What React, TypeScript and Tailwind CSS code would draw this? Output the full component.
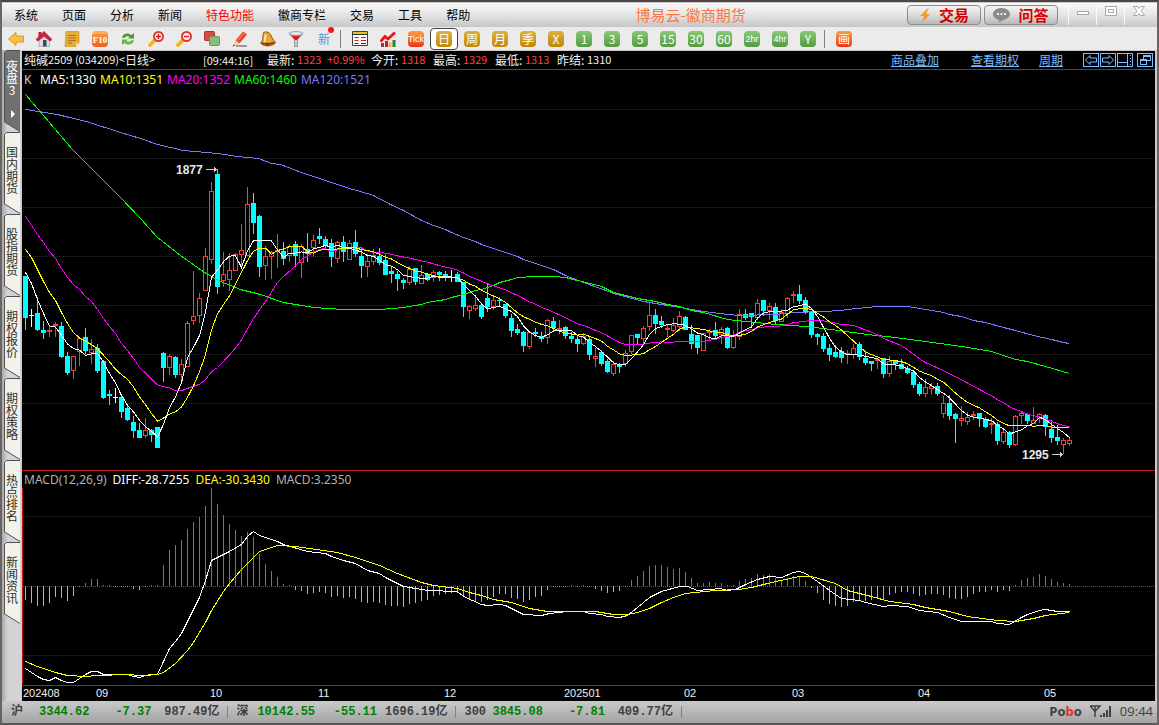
import type { ReactNode } from "react";
import clsx from "clsx";

// [direction, high, body top, body bottom, low] in chart rows
type Candle = ["u" | "d" | "f", number, number, number, number];

const candles: Candle[] = [
  ["d", 276, 276, 318, 330], ["f", 309, 315, 316, 327], ["d", 297, 313, 330, 331], ["d", 321, 330, 333, 339],
  ["u", 325, 330, 332, 337], ["u", 322, 324, 326, 337], ["d", 322, 326, 357, 358], ["d", 352, 356, 373, 375],
  ["u", 356, 356, 371, 379], ["u", 338, 338, 352, 366], ["d", 328, 337, 351, 354], ["u", 339, 349, 353, 364],
  ["d", 344, 348, 371, 373], ["d", 360, 361, 398, 399], ["d", 390, 394, 396, 405], ["f", 388, 397, 398, 403],
  ["d", 396, 397, 412, 418], ["d", 406, 408, 420, 421], ["d", 416, 422, 431, 438], ["d", 423, 430, 438, 438],
  ["u", 418, 430, 436, 438], ["d", 429, 430, 435, 442], ["d", 427, 427, 448, 448], ["d", 352, 353, 368, 382],
  ["u", 354, 356, 368, 375], ["d", 356, 357, 375, 378], ["u", 359, 364, 375, 380], ["u", 321, 323, 367, 367],
  ["u", 271, 316, 321, 325], ["u", 293, 298, 316, 323], ["u", 248, 256, 291, 291], ["u", 182, 191, 260, 264],
  ["d", 169, 174, 287, 294], ["u", 252, 274, 281, 287], ["u", 253, 270, 280, 291], ["u", 253, 254, 271, 271],
  ["u", 224, 250, 255, 267], ["u", 187, 204, 256, 256], ["d", 193, 203, 223, 234], ["d", 215, 216, 267, 277],
  ["u", 246, 256, 266, 280], ["u", 251, 252, 257, 279], ["u", 234, 250, 252, 268], ["d", 242, 251, 259, 265],
  ["u", 244, 246, 256, 262], ["d", 241, 244, 256, 267], ["u", 244, 246, 263, 278], ["d", 233, 249, 254, 262],
  ["u", 235, 240, 248, 257], ["d", 228, 236, 239, 244], ["d", 236, 239, 245, 249], ["d", 239, 243, 257, 267],
  ["u", 241, 242, 259, 263], ["d", 236, 242, 252, 262], ["u", 240, 243, 260, 260], ["d", 230, 242, 254, 257],
  ["d", 247, 256, 266, 278], ["u", 254, 261, 267, 277], ["u", 249, 255, 262, 265], ["d", 248, 256, 263, 265],
  ["d", 255, 260, 275, 275], ["d", 267, 271, 274, 283], ["d", 271, 274, 279, 291], ["d", 278, 280, 283, 289],
  ["u", 266, 269, 283, 285], ["d", 268, 268, 282, 285], ["u", 265, 275, 284, 284], ["d", 273, 274, 280, 281],
  ["u", 270, 272, 278, 282], ["d", 271, 272, 275, 281], ["d", 271, 274, 278, 281], ["f", 270, 277, 278, 282],
  ["d", 272, 274, 282, 282], ["d", 282, 282, 307, 317], ["u", 305, 306, 311, 319], ["u", 297, 305, 309, 311],
  ["d", 304, 305, 317, 319], ["d", 284, 298, 307, 312], ["u", 297, 300, 307, 310], ["d", 297, 300, 301, 307],
  ["d", 304, 304, 316, 318], ["d", 314, 318, 331, 337], ["d", 324, 329, 333, 335], ["d", 331, 332, 346, 352],
  ["u", 331, 332, 347, 349], ["d", 328, 332, 334, 337], ["d", 332, 336, 339, 342], ["u", 319, 320, 338, 344],
  ["d", 317, 321, 328, 331], ["u", 320, 328, 330, 334], ["d", 326, 327, 336, 339], ["d", 332, 336, 339, 343],
  ["d", 336, 339, 344, 352], ["u", 333, 336, 344, 345], ["d", 337, 339, 355, 360], ["u", 348, 356, 359, 367],
  ["d", 350, 352, 364, 366], ["d", 359, 361, 372, 373], ["u", 361, 364, 374, 376], ["d", 363, 365, 367, 373],
  ["u", 350, 353, 364, 367], ["u", 335, 335, 352, 354], ["d", 334, 334, 338, 344], ["u", 326, 328, 339, 343],
  ["u", 303, 315, 327, 331], ["d", 309, 315, 324, 334], ["d", 316, 321, 325, 328], ["u", 325, 328, 330, 337],
  ["u", 318, 325, 331, 332], ["u", 311, 316, 327, 331], ["d", 316, 317, 330, 330], ["d", 325, 334, 344, 349],
  ["d", 335, 335, 348, 354], ["u", 333, 333, 351, 351], ["u", 329, 331, 333, 341], ["d", 322, 330, 336, 340],
  ["u", 327, 329, 335, 344], ["d", 327, 328, 348, 349], ["u", 330, 336, 348, 349], ["u", 309, 314, 337, 340],
  ["d", 309, 314, 318, 320], ["d", 313, 313, 317, 327], ["u", 299, 303, 318, 320], ["d", 300, 300, 311, 316],
  ["u", 303, 306, 311, 320], ["d", 303, 307, 321, 324], ["u", 309, 312, 322, 322], ["u", 297, 298, 314, 318],
  ["u", 291, 294, 296, 303], ["d", 285, 294, 301, 304], ["d", 297, 300, 312, 314], ["d", 311, 311, 335, 338],
  ["d", 333, 334, 337, 345], ["d", 333, 336, 349, 352], ["d", 344, 348, 355, 361], ["d", 345, 352, 357, 358],
  ["d", 347, 351, 358, 363], ["u", 350, 353, 355, 364], ["u", 344, 348, 355, 359], ["d", 342, 344, 357, 360],
  ["d", 352, 358, 363, 365], ["d", 361, 361, 364, 371], ["u", 358, 359, 361, 369], ["d", 358, 358, 374, 378],
  ["u", 356, 361, 374, 377], ["d", 360, 361, 364, 370], ["d", 359, 364, 369, 369], ["d", 366, 368, 373, 374],
  ["d", 370, 372, 385, 388], ["d", 382, 384, 394, 396], ["u", 379, 387, 394, 397], ["u", 383, 386, 389, 395],
  ["d", 383, 386, 394, 396], ["u", 396, 403, 414, 418], ["d", 395, 403, 416, 420], ["d", 413, 414, 419, 443],
  ["u", 406, 418, 421, 426], ["u", 412, 417, 422, 425], ["u", 411, 414, 416, 420], ["d", 413, 413, 419, 427],
  ["d", 417, 419, 427, 428], ["u", 418, 423, 425, 434], ["d", 422, 424, 441, 445], ["u", 429, 432, 442, 444],
  ["d", 431, 432, 445, 448], ["u", 415, 416, 445, 446], ["u", 411, 413, 416, 424], ["d", 413, 414, 421, 424],
  ["u", 407, 420, 424, 424], ["u", 413, 414, 419, 423], ["d", 414, 415, 427, 436], ["d", 420, 429, 438, 443],
  ["d", 425, 437, 441, 445], ["u", 438, 440, 445, 454], ["u", 438, 440, 444, 446],
];

const macdBars = [
  -14, -17, -20, -20, -17, -11, -12, -15, -10, -1, 3, 7, 7, 1, 1, -1, -1, -1, -3, -4, -1, 1, 1, 21, 36, 41, 46, 57, 64,
  69, 80, 98, 82, 71, 62, 56, 50, 54, 49, 32, 22, 15, 9, 2, 1, -4, -5, -8, -7, -6, -7, -11, -10, -12, -11, -13, -16,
  -17, -16, -17, -19, -20, -20, -21, -18, -17, -15, -14, -10, -9, -8, -7, -7, -11, -14, -15, -16, -14, -11, -8, -8, -12,
  -13, -16, -14, -11, -10, -4, -1, -1, -1, 1, -1, 1, -1, -3, -5, -7, -6, -5, -1, 6, 10, 15, 20, 21, 21, 19, 17, 18, 14,
  8, 3, 3, 4, 3, 3, 1, 1, 5, 7, 8, 12, 11, 12, 8, 6, 8, 10, 9, 5, -2, -7, -14, -18, -20, -21, -20, -16, -14, -15, -14,
  -12, -13, -9, -7, -6, -6, -8, -10, -9, -8, -8, -9, -12, -13, -13, -11, -8, -6, -6, -4, -6, -4, -5, 1, 6, 8, 9, 12, 10,
  7, 4, 3, 2,
];

const ma60 =
  "25,94 72,149 120,197 140,218 157,237 180,255 204,272 220,281 240,289 260,294 283,302 313,307 343,309 380,309 403,307 421,304 427,302 445,299 451,297 463,294 475,290 481,289 493,285 499,282 511,279 517,277 535,276 553,276 565,277 577,280 590,283 601,286 613,292 625,295 637,298 655,301 667,304 679,306 691,310 703,312 727,319 745,321 775,324 793,325 823,328 867,334 895,337 925,341 961,346 991,351 1015,359 1027,361 1045,366 1069,373";
const ma120 =
  "25,109 57,114 69,117 86,121 120,132 140,138 157,144 183,150 217,153 237,156 258,158 271,163 280,164 301,172 307,174 325,180 349,188 360,191 373,195 390,204 403,210 421,220 433,225 445,229 451,232 463,237 475,241 481,244 499,250 517,256 523,259 553,269 565,275 583,282 600,288 613,293 643,301 667,305 703,311 727,314 739,315 775,314 793,312 823,311 841,310 847,309 877,306 907,306 925,309 943,312 949,314 961,316 973,320 985,322 1003,327 1015,330 1033,335 1051,339 1063,342 1069,343";
const diff =
  "25,668 37,676 43,679 49,680 55,677 61,680 67,682 73,682 85,674 91,671 97,671 103,674 127,674 133,676 139,677 145,675 157,674 163,661 169,648 175,641 181,633 187,621 193,609 199,597 205,580 211,560 229,551 241,544 247,536 253,531 259,535 277,541 283,544 307,551 325,553 331,556 343,560 355,563 367,570 379,573 385,577 403,586 415,588 427,590 457,591 463,596 481,604 487,605 499,604 505,605 523,614 541,615 549,613 567,611 583,611 589,613 601,614 607,616 619,617 627,615 637,607 649,597 661,591 679,586 687,586 697,590 720,588 727,590 735,589 745,584 757,579 769,576 781,577 793,572 799,571 805,573 817,581 829,590 841,598 859,600 865,602 883,606 890,605 907,606 919,610 937,612 949,617 961,621 991,621 997,623 1009,624 1021,617 1027,614 1039,610 1045,609 1057,611 1069,611";
const dea =
  "25,661 37,666 55,672 67,675 85,676 97,675 127,674 139,675 157,674 163,672 175,663 187,650 193,642 205,622 211,610 223,591 229,583 241,569 253,557 259,551 277,545 295,546 337,552 355,557 379,565 397,573 421,582 433,585 457,588 469,592 481,595 493,599 511,602 529,608 547,611 595,611 613,614 627,614 637,612 649,608 661,602 673,597 685,593 715,590 739,589 751,587 763,584 780,580 799,576 811,576 835,583 847,590 859,593 871,596 889,601 913,604 925,607 949,611 967,616 997,620 1015,621 1033,618 1045,615 1069,612";

const closes = candles.map(([dir, , top, bottom]) => (dir === "u" ? top : bottom));
const xOf = (i: number) => 25 + i * 6;

// moving average, with the values that come from before the first bar
const average = (n: number, lead: number[]) =>
  closes
    .map((_, i) => {
      const y = i < lead.length ? lead[i] : closes.slice(i - n + 1, i + 1).reduce((a, b) => a + b, 0) / n;
      return `${xOf(i)},${y}`;
    })
    .join(" ");

const ma5 = average(5, [272, 283, 299, 313]);
const ma10 = average(10, [249, 257, 269, 281, 292, 300, 312, 323, 332]);
const ma20 = average(20, [216, 225, 234, 242, 251, 258, 268, 277, 284, 289, 296, 301, 309, 318, 326, 333, 343, 350, 358]);

const RED = "#ff3c3c";
const CYAN = "#00ffff";

const GridLine = ({ y, color = "#900000" }: { y: number; color?: string }) => (
  <line x1="1" x2="100%" y1={y + 0.5} y2={y + 0.5} stroke={color} strokeDasharray="1 1" />
);

const Curve = ({ points, color }: { points: string; color: string }) => (
  <polyline points={points} transform="translate(0.5 0.5)" fill="none" stroke={color} />
);

const Bar = ({ candle, x }: { candle: Candle; x: number }) => {
  const [dir, high, top, bottom, low] = candle;
  const color = dir === "u" ? RED : dir === "d" ? CYAN : "#ffffff";
  const hollow = dir === "u" && bottom - top > 2;
  return (
    <g fill={color}>
      <rect x={x} y={high} width="1" height={Math.max(top - high, 0)} />
      <rect x={x} y={bottom} width="1" height={Math.max(low - bottom, 0)} />
      {hollow ? (
        <rect x={x - 1.5} y={top + 0.5} width="4" height={bottom - top - 1} fill="none" stroke={color} />
      ) : (
        <rect x={x - 2} y={top} width="5" height={Math.max(bottom - top, 1)} />
      )}
    </g>
  );
};

const PriceChart = () => (
  <svg className="block h-[380px] w-full" shapeRendering="crispEdges" role="img" aria-label="K">
    {[19, 68, 117, 166, 215, 264, 313].map((y) => (
      <GridLine key={y} y={y} />
    ))}
    <g transform="translate(-22 -90)">
      {candles.map((c, i) => (
        <Bar key={i} candle={c} x={xOf(i)} />
      ))}
      <Curve points={ma120} color="#7878ff" />
      <Curve points={ma60} color="#00ff00" />
      <Curve points={ma20} color="#ff00ff" />
      <Curve points={ma10} color="#ffff00" />
      <Curve points={ma5} color="#ffffff" />
      <g fill="#e8e8e8" className="font-['Liberation_Sans',sans-serif] text-xs font-bold">
        <text x="176" y="174">1877</text>
        <text x="1022" y="459">1295</text>
      </g>
      <g fill="none" stroke="#d0d0d0">
        <path d="M206 169.500h11M214.500 167v5M215.500 168v3" />
        <path d="M1052 454.500h11M1060.500 452v5M1061.500 453v3" />
      </g>
    </g>
  </svg>
);

const MacdChart = () => (
  <svg className="block h-[197px] w-full" shapeRendering="crispEdges" role="img" aria-label="MACD">
    <rect x="0" y="0" width="1" height="196" fill="#c81414" />
    <GridLine y={28} />
    <GridLine y={98} color="#e01818" />
    <GridLine y={167} />
    <g transform="translate(-22 -488)">
      {macdBars.map((v, i) => (
        <rect
          key={i}
          x={xOf(i)}
          y={v > 0 ? 586 - v : 586}
          width="1"
          height={Math.abs(v)}
          fill={v > 0 ? RED : CYAN}
        />
      ))}
      <Curve points={diff} color="#ffffff" />
      <Curve points={dea} color="#ffff00" />
    </g>
  </svg>
);

const months = [
  [1, "202408"], [74, "09"], [188, "10"], [296, "11"], [422, "12"],
  [542, "202501"], [662, "02"], [770, "03"], [896, "04"], [1022, "05"],
] as const;

const DateAxis = () => (
  <svg className="block h-[15px] w-full font-['Liberation_Sans',sans-serif] text-[11px]" fill="#f0f0f0">
    {months.map(([x, label]) => (
      <text key={x} x={x} y="11">
        {label}
      </text>
    ))}
  </svg>
);

const menus = ["系统", "页面", "分析", "新闻", "特色功能", "徽商专栏", "交易", "工具", "帮助"];

const WindowButton = ({ label, children }: { label: string; children: ReactNode }) => (
  <button aria-label={label} className="flex h-5 w-7 items-start justify-center border-l border-white/80">
    <svg width="14" height="12" viewBox="0 0 14 12" fill="#fff" stroke="#a8a8a8">
      {children}
    </svg>
  </button>
);

const bigButton =
  "flex h-5 w-[74px] items-center justify-center gap-2 rounded border border-[#8c8c8c] bg-linear-to-b from-[#f4f4f4] via-[#dcdcdc] to-[#b8b8b8] text-[15px] leading-4 font-bold text-[#d80000]";

const MenuBar = () => (
  <header className="flex h-6 items-center bg-linear-to-b from-[#fafafa] via-[#e4e4e4] to-[#c6c6c6] pl-3">
    <nav className="flex gap-6">
      {menus.map((m) => (
        <button key={m} className={clsx("whitespace-nowrap", m === "特色功能" ? "text-[#ff0000]" : "text-black")}>
          {m}
        </button>
      ))}
    </nav>
    <h1 className="flex-1 pl-1 text-center text-[15px] text-[#f97848]">博易云-徽商期货</h1>
    <div className="flex gap-[3px] pr-2.5">
      <button className={bigButton}>
        <svg width="12" height="16" viewBox="0 0 12 16" fill="#f49a1c" aria-hidden>
          <path d="M10 0 1 9h4L3 16l8-9H7z" />
        </svg>
        交易
      </button>
      <button className={bigButton}>
        <svg width="17" height="14" viewBox="0 0 17 14" aria-hidden>
          <path d="M8.500 0C3.800 0 0 2.600 0 6s3.200 5.500 6.500 5.900L4.800 14c3-.2 4.500-1.200 5.500-2.200C14 11.300 17 9 17 6s-3.800-6-8.500-6z" fill="#8a8a8a" />
          <path d="M4 5h2v2H4zM7.500 5h2v2h-2zM11 5h2v2h-2z" fill="#eee" />
        </svg>
        问答
      </button>
    </div>
    <div className="flex pr-[5px]">
      <WindowButton label="最小化">
        <rect x="1.500" y="6.500" width="11" height="3" />
      </WindowButton>
      <WindowButton label="最大化">
        <rect x="1.500" y="1.500" width="11" height="9" />
        <rect x="4.500" y="4.500" width="5" height="3" />
      </WindowButton>
      <WindowButton label="关闭">
        <path d="M1.500 1.500h4L7 3.500l1.500-2h4L9 6l3.500 4.500h-4L7 8.500l-1.500 2h-4L5 6z" />
      </WindowButton>
    </div>
  </header>
);

const Tool = ({ label, active, children }: { label: string; active?: boolean; children: ReactNode }) => (
  <button
    aria-label={label}
    className={clsx(
      "flex h-[22px] w-7 shrink-0 items-center justify-center",
      active && "rounded border border-[#444] bg-white",
    )}
  >
    {children}
  </button>
);

const Icon = ({ children }: { children: ReactNode }) => (
  <svg width="16" height="16" viewBox="0 0 16 16" aria-hidden>
    {children}
  </svg>
);

const tileColors = {
  gold: "bg-linear-to-b from-[#dcb23a] to-[#c08606]",
  green: "bg-linear-to-b from-[#8cc878] to-[#539a42]",
  orange: "bg-linear-to-b from-[#ff9c40] to-[#e83018]",
};

const Tile = ({ color, children }: { color: keyof typeof tileColors; children: string }) => (
  <span
    className={clsx(
      "flex size-4 items-center justify-center rounded-sm text-white",
      tileColors[color],
      children.length > 2 ? "font-['Liberation_Sans',sans-serif] text-[9px]" : "text-xs",
    )}
  >
    {children}
  </span>
);

const ToolDivider = () => (
  <span className="flex w-2 pl-0.5">
    <span className="h-[18px] w-px bg-[#808080]" />
  </span>
);

const Magnifier = ({ plus }: { plus?: boolean }) => (
  <Icon>
    <path d="M6.500 9.500 2 14" stroke="#f8b020" strokeWidth="3.800" strokeLinecap="round" />
    <circle cx="10.500" cy="5.500" r="4.500" fill="#fff4f0" stroke="#e03830" strokeWidth="2" />
    <path d={plus ? "M8 5.500h5M10.500 3v5" : "M8 5.500h5"} stroke="#d02020" strokeWidth="1.500" />
  </Icon>
);

const Toolbar = () => (
  <div className="flex h-[23px] items-center bg-[#ebebeb]">
    <Tool label="后退">
      <Icon>
        <path d="M.5 8 8 1.500v3.500h7.500v6H8v3.500z" fill="#fbc040" stroke="#d8981c" />
      </Icon>
    </Tool>
    <Tool label="首页">
      <Icon>
        <path d="M3 7h10.500v8.500H3z" fill="#dcdce6" stroke="#909098" strokeWidth=".6" />
        <path d="M0 8.500 8 .5l8 8-2 1.500L8 5l-6 5z" fill="#d02038" stroke="#a01828" strokeWidth=".7" />
        <path d="M2.500 1h3v3l-3 2.500z" fill="#b82038" />
        <path d="M7 9h3.500v6.500H7z" fill="#404850" />
      </Icon>
    </Tool>
    <Tool label="资讯">
      <Icon>
        <path d="M2 .5h13V12l-3 3.500H1z" fill="#e8ac38" stroke="#c88c20" strokeWidth=".6" />
        <path d="M4 4.500h8M4 7h8M4 9.500h8M4 12h4" stroke="#a87420" />
        <path d="M15 12h-3v3.500z" fill="#fbdc90" />
      </Icon>
    </Tool>
    <Tool label="F10">
      <span className="flex size-4 items-center justify-center rounded-sm border-t-3 border-[#f8b058] bg-linear-to-b from-[#fb9038] to-[#f06018] font-['Liberation_Serif',serif] text-[9px] font-bold text-white">
        F10
      </span>
    </Tool>
    <Tool label="刷新">
      <Icon>
        <path d="M2 6.500C3 2.500 8 1 11.500 4l2.500-2v5.500H8l1.700-1.600C7.500 4.800 5.500 5.200 4.500 7z" fill="#489c28" />
        <path d="M14 9.500c-1 4-6 5.500-9.500 2.500L2 14V8.500h6l-1.700 1.600c2.200 1.100 4.200.7 5.200-1.100z" fill="#68b840" />
      </Icon>
    </Tool>
    <Tool label="放大"><Magnifier plus /></Tool>
    <Tool label="缩小"><Magnifier /></Tool>
    <Tool label="叠加">
      <Icon>
        <rect x=".5" y=".5" width="10" height="9" rx="1" fill="#d84848" stroke="#b03030" />
        <rect x="5.500" y="5.500" width="10" height="9" rx="1" fill="#88bc78" stroke="#609858" />
      </Icon>
    </Tool>
    <Tool label="画线">
      <Icon>
        <path d="M4 15h11" stroke="#808080" strokeWidth="1.500" />
        <path d="M3.500 9.500 11 .5l4 3-7.500 9z" fill="#e84830" />
        <path d="M3.500 9.500 7.500 12.500.5 15.500z" fill="#f8c890" />
        <path d="M2 13.500.5 15.500l2.500-.8z" fill="#303030" />
        <path d="m5.500 9.500 7-8" stroke="#ff9078" />
      </Icon>
    </Tool>
    <Tool label="预警">
      <Icon>
        <path d="M3.500 1.500C8-.5 11 3 11.500 6l4 5.500c-1 3-8 4.500-12.500 2.500L.5 12c3-2 2-7 3-10.500z" fill="#e8a438" stroke="#985810" />
        <path d="M1.500 12c4 1.500 9 1 13-.5" stroke="#7a3808" strokeWidth="1.500" fill="none" />
        <circle cx="7.500" cy="13.200" r="1.800" fill="#803810" />
        <path d="M5.500 3.500c-.5 3 0 5-1 7" stroke="#fbe8a8" strokeWidth="2" fill="none" />
      </Icon>
    </Tool>
    <Tool label="筛选">
      <Icon>
        <path d="M1.500 3h13L9.500 8.500v7h-3v-7z" fill="#c8ccd0" stroke="#808890" strokeWidth=".8" />
        <path d="M3 4.500h10L9 9H7z" fill="#e01828" />
        <ellipse cx="8" cy="2.500" rx="7" ry="1.800" fill="#e8ecee" stroke="#808890" strokeWidth=".8" />
      </Icon>
    </Tool>
    <Tool label="新功能">
      <span className="relative text-xs leading-4 text-[#4c98e0]">
        新
        <span className="absolute -top-1 -right-1 size-1.5 rounded-full bg-[#ff1010]" />
      </span>
    </Tool>
    <ToolDivider />
    <Tool label="报价">
      <Icon>
        <path d="M.5 .5h15v14H.5z" fill="#fff" stroke="#404040" />
        <path d="M1 1h14v2H1z" fill="#e8c020" />
        <path d="M1 3.500h14" stroke="#303030" />
        <path d="M2.500 6.500h4M9 6.500h5" stroke="#107020" />
        <path d="M2.500 9.500h4M9 9.500h5" stroke="#d02020" />
        <path d="M2.500 12.500h4M9 12.500h5" stroke="#102890" />
      </Icon>
    </Tool>
    <Tool label="走势">
      <Icon>
        <path d="M1 12h3v4H1z" fill="#a83030" />
        <path d="M5 10h3v6H5z" fill="#c02020" />
        <path d="M8.500 11.500h3V16h-3z" fill="#e0b060" />
        <path d="M12.500 9h3v7h-3z" fill="#308040" />
        <path d="M.5 10.500 5 5.500l3 2.500 7-6.500" stroke="#f01010" strokeWidth="2.800" fill="none" />
      </Icon>
    </Tool>
    <Tool label="Tick"><Tile color="orange">Tick</Tile></Tool>
    <Tool label="日" active><Tile color="gold">日</Tile></Tool>
    {["周", "月", "季", "X"].map((t) => (
      <Tool key={t} label={t}><Tile color="gold">{t}</Tile></Tool>
    ))}
    {["1", "3", "5", "15", "30", "60", "2hr", "4hr", "Y"].map((t) => (
      <Tool key={t} label={t}><Tile color="green">{t}</Tile></Tool>
    ))}
    <ToolDivider />
    <Tool label="画"><Tile color="orange">画</Tile></Tool>
  </div>
);

const sideTabs = ["夜盘3", "国内期货", "股指期货", "期权报价", "期权策略", "热点排名", "新闻资讯"];

const SideTabs = () => (
  <nav className="flex w-[19px] shrink-0 flex-col bg-linear-to-r from-[#a8a8a8] to-[#d4d4d8] to-30% pl-0.5">
    {sideTabs.map((name, i) => (
      <button
        key={name}
        className={clsx(
          "relative flex h-[82px] w-4 shrink-0 justify-center",
          i === 0 ? "pt-2.5 text-white" : "pt-3.5 text-[#303030]",
        )}
      >
        <svg className="absolute inset-0" width="16" height="82" viewBox="0 0 16 82" aria-hidden>
          <path
            d="M16 .5H2.500L.5 2.500V72L16 81.500"
            fill={i === 0 ? "#707070" : "#f2f2ea"}
            stroke="#505050"
          />
          {i === 0 && <path d="M7 60v8l4-4z" fill="#fff" />}
        </svg>
        <span className="relative w-3 text-center text-xs leading-3 break-all">{name}</span>
      </button>
    ))}
  </nav>
);

const quotes = [
  { label: "最新:", value: "1323", extra: "+0.99%", red: true },
  { label: "今开:", value: "1318", red: true },
  { label: "最高:", value: "1329", red: true },
  { label: "最低:", value: "1313", red: true },
  { label: "昨结:", value: "1310", red: false },
];

const BoxIcon = ({ label, children }: { label: string; children: ReactNode }) => (
  <button aria-label={label}>
    <svg width="16" height="14" viewBox="0 0 16 14" fill="none" stroke="#7cbcff" shapeRendering="crispEdges">
      <rect x=".5" y=".5" width="15" height="13" />
      {children}
    </svg>
  </button>
);

const QuoteHeader = () => (
  <div className="flex h-[19px] items-center border-b border-[#c81414] px-0.5 text-[11px] whitespace-nowrap text-[#f0f0f0]">
    <div className="flex w-[179px]">
      <span className="text-xs">纯碱</span>2509 (034209)&lt;<span className="text-xs">日线</span>&gt;
    </div>
    <span className="w-16">[09:44:16]</span>
    <dl className="flex gap-2">
      {quotes.map((q) => (
        <div key={q.label} className="flex">
          <dt className="w-[30px] text-xs">{q.label}</dt>
          <dd className={clsx("flex gap-1.5", q.red && "text-[#ff4040]")}>
            <span className="w-6">{q.value}</span>
            {q.extra && <span className="w-9">{q.extra}</span>}
          </dd>
        </div>
      ))}
    </dl>
    <div className="ml-auto flex items-center text-xs text-[#7cbcff]">
      <a href="#overlay" className="mr-8 underline">商品叠加</a>
      <a href="#options" className="mr-5 underline">查看期权</a>
      <a href="#period" className="mr-5 underline">周期</a>
      <div className="flex gap-px">
        <BoxIcon label="左移">
          <path d="M2.500 7 7 2.500v2.500h6.500v4H7v2.500z" shapeRendering="auto" />
        </BoxIcon>
        <BoxIcon label="右移">
          <path d="M13.500 7 9 2.500v2.500H2.500v4H9v2.500z" shapeRendering="auto" />
        </BoxIcon>
        <BoxIcon label="侧栏">
          <path d="M1 9.500h9M10.500 1v12M13.500 2v1M13.500 5v1M13.500 8v1M13.500 11v1" />
        </BoxIcon>
      </div>
      <div className="ml-1 flex">
        <BoxIcon label="还原">
          <path d="M6.500 6V2.500h7v5H10M3.500 6.500h6v5h-6zM6 3.500h8M3 7.500h7" />
        </BoxIcon>
      </div>
    </div>
  </div>
);

const Legend = () => (
  <div className="flex h-5 items-center gap-1 pl-0.5 font-['Noto_Sans',sans-serif] text-xs text-[#d0d0d0]">
    <span className="w-3">K</span>
    <span className="text-white">MA5:1330</span>
    <span className="text-[#ffff00]">MA10:1351</span>
    <span className="text-[#ff00ff]">MA20:1352</span>
    <span className="text-[#00ff00]">MA60:1460</span>
    <span className="text-[#7878ff]">MA120:1521</span>
  </div>
);

const indices = [
  { name: "沪", value: "3344.62", change: "-7.37", volume: "987.49" },
  { name: "深", value: "10142.55", change: "-55.11", volume: "1696.19" },
  { name: "300", value: "3845.08", change: "-7.81", volume: "409.77" },
];

const StatusBar = () => (
  <footer className="flex h-6 items-center border-b-2 border-[#585858] bg-linear-to-b from-[#cacaca] to-[#a4a4a4] pl-[9px] font-['Liberation_Mono','Noto_Sans_CJK_SC',monospace] text-xs font-bold text-[#404040]">
    {indices.map((x) => (
      <div key={x.name} className="flex items-center whitespace-nowrap">
        <span className={x.name === "深" ? "w-[21px]" : "w-7"}>{x.name}</span>
        <span className="text-[#008000]">{x.value}</span>
        <span className="w-[62px] text-right text-[#008000]">{x.change}</span>
        <span className="ml-2 min-w-[60px] text-right">{x.volume}亿</span>
        <span className="mx-2 h-3 w-px bg-[#808080]" />
      </div>
    ))}
    <div className="ml-auto flex items-center gap-2 pr-1 font-['Open_Sans',sans-serif] text-[13px]">
      <span>
        Po<span className="text-[#f02828]">b</span>o
      </span>
      <svg width="22" height="13" viewBox="0 0 22 13" aria-hidden>
        <path d="M0 1h10L5 6.500zM5 1v11" fill="none" stroke="#404040" strokeWidth="1.500" />
        <path d="M10 10h2v2h-2zM13 8h2v4h-2zM16 5h2v7h-2zM19 1h2v11h-2z" fill="#404040" />
      </svg>
      <time className="font-normal">09:44</time>
    </div>
  </footer>
);

export default function App() {
  return (
    <div className="flex min-h-screen flex-col border-x-2 border-t-2 border-[#686464] border-t-[#4a4646] bg-[#d0c8c8] pt-px font-['Noto_Sans_CJK_SC',sans-serif] text-xs">
      <MenuBar />
      <Toolbar />
      <main className="flex flex-1">
        <SideTabs />
        <div className="min-w-0 flex-1 pt-px pr-0.5 pl-px">
          <section className="bg-black">
            <QuoteHeader />
            <Legend />
            <PriceChart />
            <div className="flex h-[18px] items-center gap-1.5 border-t border-[#c81414] pl-0.5 font-['Noto_Sans',sans-serif] text-xs text-[#b0b0b0]">
              <span>MACD(12,26,9)</span>
              <span className="text-white">DIFF:-28.7255</span>
              <span className="text-[#ffff00]">DEA:-30.3430</span>
              <span>MACD:3.2350</span>
            </div>
            <MacdChart />
            <div className="border-t border-[#c81414]">
              <DateAxis />
            </div>
          </section>
        </div>
      </main>
      <StatusBar />
    </div>
  );
}
